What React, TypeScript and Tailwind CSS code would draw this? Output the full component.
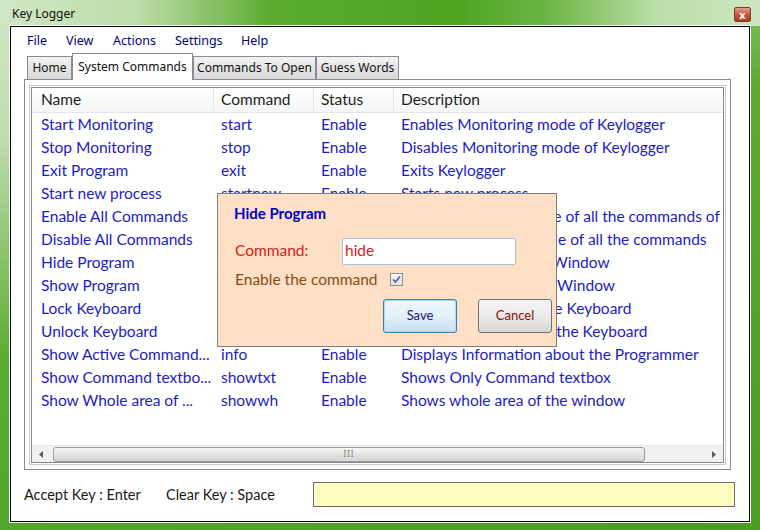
import React from "react";

interface Row {
  name: string;
  command: string;
  status: string;
  description: string;
}

const rows: Row[] = [
  { name: "Start Monitoring", command: "start", status: "Enable", description: "Enables Monitoring mode of Keylogger" },
  { name: "Stop Monitoring", command: "stop", status: "Enable", description: "Disables Monitoring mode of Keylogger" },
  { name: "Exit Program", command: "exit", status: "Enable", description: "Exits Keylogger" },
  { name: "Start new process", command: "startnew", status: "Enable", description: "Starts new process" },
  { name: "Enable All Commands", command: "enableall", status: "Enable", description: "Sets the state to Enable of all the commands of Keylogger" },
  { name: "Disable All Commands", command: "disableall", status: "Enable", description: "Sets the state to Disable of all the commands" },
  { name: "Hide Program", command: "hide", status: "Enable", description: "Hides the Keylogger's Window" },
  { name: "Show Program", command: "show", status: "Enable", description: "Shows the Keylogger's Window" },
  { name: "Lock Keyboard", command: "lock", status: "Enable", description: "Locks all the keys of the Keyboard" },
  { name: "Unlock Keyboard", command: "unlock", status: "Enable", description: "Unlocks all the keys of the Keyboard" },
  { name: "Show Active Command...", command: "info", status: "Enable", description: "Displays Information about the Programmer" },
  { name: "Show Command textbo...", command: "showtxt", status: "Enable", description: "Shows Only Command textbox" },
  { name: "Show Whole area of ...", command: "showwh", status: "Enable", description: "Shows whole area of the window" },
];

const menu = [
  { label: "File", w: "w-[39px]" },
  { label: "View", w: "w-[47px]" },
  { label: "Actions", w: "w-[62px]" },
  { label: "Settings", w: "w-[66px]" },
  { label: "Help", w: "w-[40px]" },
];

const Tab: React.FC<{ label: string; width: string; active?: boolean }> = ({ label, width, active }) => {
  if (active) {
    return (
      <div
        className={`${width} h-[27px] -mb-px relative z-10 bg-white border border-b-0 border-[#898c95] flex items-start justify-center pt-[4px] text-[12px] whitespace-nowrap text-[#111]`}
      >
        {label}
      </div>
    );
  }
  return (
    <div
      className={`${width} h-[23px] bg-[linear-gradient(to_bottom,#f3f3f3,#e6e6e6_50%,#d8d8d8)] border border-b-0 border-[#898c95] flex items-center justify-center text-[12px] whitespace-nowrap text-[#111]`}
    >
      {label}
    </div>
  );
};

const App: React.FC = () => {
  return (
    <div className="relative w-[760px] h-[530px] flex flex-col overflow-hidden bg-[linear-gradient(160deg,#d3e6ca_0%,#bcdcaa_18%,#5aab2e_45%,#4a9d22_100%)] font-['Noto_Sans',sans-serif]">
      {/* title bar */}
      <div className="h-[26px] flex items-center justify-between pl-[12px] pr-[9px] bg-[linear-gradient(to_right,#cfe7c3_0%,#bcdda9_18%,#5aab2e_36%,#4ea321_60%,#6ab544_72%,#b9dea6_86%,#cde6c1_100%)]">
        <span className="text-[12px] text-[#111] mt-[2px]">Key Logger</span>
        <div className="w-[17px] h-[15px] rounded-[2px] border border-[#7a3b2f] bg-[linear-gradient(to_bottom,#e4a08f,#c9553e_50%,#b23a22)] flex items-center justify-center mt-[3px]">
          <span className="text-[11px] font-bold leading-none text-white">x</span>
        </div>
      </div>

      {/* client area */}
      <div className="mx-[10px] flex-1 mb-[8px] bg-white border border-black shadow-[0_0_0_1px_#f4f8f2] flex flex-col">
        <div className="h-[28px] flex items-center pl-[16px] text-[12.5px] text-[#000080]">
          {menu.map((m) => (
            <span key={m.label} className={m.w}>
              {m.label}
            </span>
          ))}
        </div>

        <div className="flex items-end ml-[16px] h-[24px]">
          <Tab label="Home" width="w-[45px]" />
          <Tab label="System Commands" width="w-[121px]" active />
          <Tab label="Commands To Open" width="w-[123px]" />
          <Tab label="Guess Words" width="w-[83px]" />
        </div>

        {/* tab panel */}
        <div className="ml-[13px] w-[707px] h-[391px] border border-[#898c95] bg-white pt-[5px] px-[4px] pb-[4px]">
          <div className="w-full h-full border border-[#c9c9c9] p-[1px]">
            <div className="w-full h-full border border-[#828790] flex flex-col font-['Lato',sans-serif] text-[15.5px]">
              <div className="h-[25px] shrink-0 flex items-center pl-[2px] bg-[linear-gradient(to_bottom,#ffffff,#f4f5f6)] border-b border-[#e3e5e8] text-[#1e1e1e]">
                <div className="w-[180px] pl-[7px] border-r border-[#e5e5e5] h-full flex items-center">Name</div>
                <div className="w-[100px] pl-[7px] border-r border-[#e5e5e5] h-full flex items-center">Command</div>
                <div className="w-[80px] pl-[7px] border-r border-[#e5e5e5] h-full flex items-center">Status</div>
                <div className="flex-1 pl-[7px] h-full flex items-center">Description</div>
              </div>
              <div className="flex-1 overflow-hidden">
                {rows.map((r) => (
                  <div key={r.name} className="h-[23px] flex items-center pl-[2px] text-[#1c1cc6] whitespace-nowrap">
                    <div className="w-[180px] pl-[7px] overflow-hidden">{r.name}</div>
                    <div className="w-[100px] pl-[7px] overflow-hidden">{r.command}</div>
                    <div className="w-[80px] pl-[7px] overflow-hidden">{r.status}</div>
                    <div className="flex-1 pl-[7px] overflow-hidden">{r.description}</div>
                  </div>
                ))}
              </div>
              {/* horizontal scrollbar */}
              <div className="h-[17px] shrink-0 flex items-center bg-[#f0f0f0] border-t border-[#e6e6e6]">
                <div className="w-[18px] h-full flex items-center justify-center">
                  <svg width="4" height="7" viewBox="0 0 4 7">
                    <path d="M4 0 L0 3.5 L4 7 Z" fill="#5a5a5a" />
                  </svg>
                </div>
                <div className="ml-[3px] w-[592px] h-[15px] rounded-[3px] border border-[#9b9b9b] bg-[linear-gradient(to_bottom,#f6f6f6,#e4e4e4_50%,#d4d4d4)] flex items-center justify-center">
                  <span className="text-[8px] leading-none text-[#777] tracking-[1px] font-['Noto_Sans',sans-serif]">III</span>
                </div>
                <div className="flex-1" />
                <div className="w-[18px] h-full flex items-center justify-center">
                  <svg width="4" height="7" viewBox="0 0 4 7">
                    <path d="M0 0 L4 3.5 L0 7 Z" fill="#5a5a5a" />
                  </svg>
                </div>
              </div>
            </div>
          </div>
        </div>

        {/* bottom bar */}
        <div className="flex items-center mt-[12px] font-['Lato',sans-serif] text-[14.5px] text-[#1a1a1a]">
          <span className="ml-[13px] w-[142px]">Accept Key : Enter</span>
          <span className="w-[147px]">Clear Key : Space</span>
          <div className="w-[422px] h-[25px] bg-[#fffcc0] border border-[#6e6e6e]" />
        </div>
      </div>

      {/* Hide Program dialog */}
      <div className="absolute left-[217px] top-[193px] w-[340px] h-[154px] bg-[#fde0c5] border border-[#7e7e7e] font-['Lato',sans-serif]">
        <div className="pl-[16px] pt-[8px] text-[15px] font-bold text-[#0000c8]">Hide Program</div>
        <div className="flex items-center mt-[13px] pl-[17px]">
          <span className="w-[107px] text-[15.5px] text-[#d41c1c]">Command:</span>
          <div className="w-[174px] h-[27px] bg-white border border-[#a9c1dc] rounded-[2px] flex items-center pl-[2px] text-[15.5px] text-[#d41c1c]">
            hide
          </div>
        </div>
        <div className="flex items-center mt-[3px] pl-[17px]">
          <span className="text-[15.5px] text-[#8c4a12]">Enable the command</span>
          <div className="ml-[12px] w-[13px] h-[13px] border border-[#8e8f8f] bg-[linear-gradient(to_bottom,#f4f4f4,#e2e2e2)] flex items-center justify-center">
            <svg width="9" height="9" viewBox="0 0 9 9">
              <path d="M1 4.5 L3.5 7 L8 1.5" stroke="#4a5f97" strokeWidth="1.6" fill="none" />
            </svg>
          </div>
        </div>
        <div className="flex mt-[8px] pl-[165px] gap-[21px]">
          <div className="w-[74px] h-[34px] rounded-[3px] border border-[#3c7fb1] bg-[linear-gradient(to_bottom,#eef7fc,#e3f1fa_50%,#c8dfee)] shadow-[inset_0_0_0_1px_#a8dbf5] flex items-center justify-center text-[13px] text-[#15157a]">
            Save
          </div>
          <div className="w-[74px] h-[34px] rounded-[3px] border border-[#707070] bg-[linear-gradient(to_bottom,#f4f4f4,#ebebeb_50%,#d6d6d6)] flex items-center justify-center text-[13px] text-[#8b0a0a]">
            Cancel
          </div>
        </div>
      </div>
    </div>
  );
};

export default App;
